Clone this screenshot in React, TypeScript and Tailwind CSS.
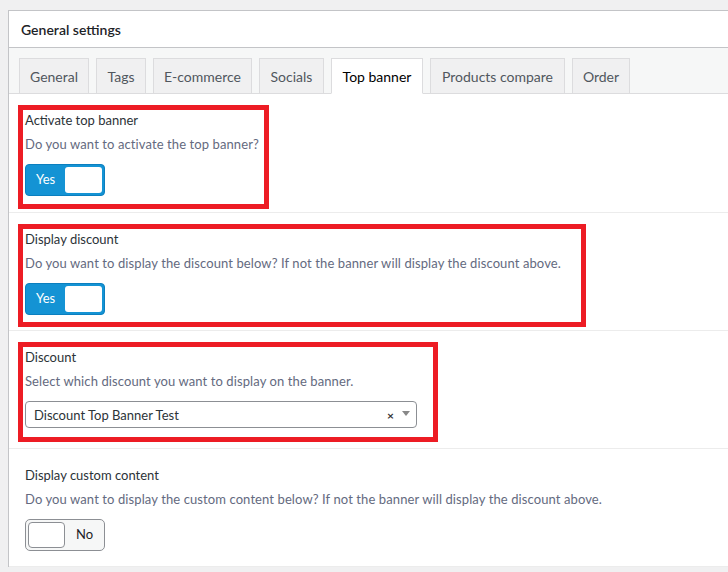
import React from "react";

const tabs: { name: string; w: string }[] = [
  { name: "General", w: "w-[70px]" },
  { name: "Tags", w: "w-[50px]" },
  { name: "E-commerce", w: "w-[99px]" },
  { name: "Socials", w: "w-[65px]" },
  { name: "Top banner", w: "w-[92px]" },
  { name: "Products compare", w: "w-[135px]" },
  { name: "Order", w: "w-[58px]" },
];

function ToggleYes() {
  return (
    <div className="flex h-[32px] w-[80px] items-center justify-between rounded-[4px] border border-[#0b7fbf] bg-[#1493d4] pl-[10px] pr-[2px]">
      <span className="text-[13px] text-white">Yes</span>
      <span className="h-[26px] w-[37px] rounded-[3px] bg-white" />
    </div>
  );
}

function ToggleNo() {
  return (
    <div className="flex h-[32px] w-[80px] items-center rounded-[5px] border border-[#8c8f94] bg-[#f6f7f7] pl-[2px]">
      <span className="h-[26px] w-[37px] rounded-[4px] border border-[#8c8f94] bg-white" />
      <span className="ml-[11px] text-[13px] text-[#1d2327]">No</span>
    </div>
  );
}

function Section({
  label,
  desc,
  children,
  box,
  first,
}: {
  label: string;
  desc: string;
  children: React.ReactNode;
  box?: string;
  first?: boolean;
}) {
  return (
    <div
      className={
        first
          ? "relative border-b border-[#ececec] pl-[16px] pt-[16px] pb-[16px]"
          : "relative border-b border-[#ececec] pl-[16px] pt-[16px] pb-[15px]"
      }
    >
      <div className="h-[20px] text-[13px] leading-[20px] text-[#2c3338]">{label}</div>
      <div className="mt-[4px] h-[20px] text-[13px] leading-[20px] tracking-[0.1px] text-[#646a80]">{desc}</div>
      <div className="mt-[10px] h-[32px]">{children}</div>
      {box && <div className={box} />}
    </div>
  );
}

export default function App() {
  return (
    <div className="min-h-screen bg-[#f0f0f1] pl-[8px] pt-[10px] font-[Lato,sans-serif]">
      <div className="border-l border-t border-[#c3c4c7] bg-white">
        <div className="flex h-[37px] items-center border-b border-[#c3c4c7] pl-[12px] text-[14px] font-semibold text-[#1d2327]">
          General settings
        </div>
        <div className="flex gap-[7px] border-b border-[#dcdcde] bg-[#f6f7f7] pl-[10px] pt-[10px]">
          {tabs.map((t) =>
            t.name === "Top banner" ? (
              <div
                key={t.name}
                className={`${t.w} -mb-px flex h-[36px] items-center justify-center border border-b-white border-[#dcdcde] bg-white pt-[1px] text-[14px] text-[#000]`}
              >
                {t.name}
              </div>
            ) : (
              <div
                key={t.name}
                className={`${t.w} flex h-[35px] items-center justify-center border border-b-0 border-[#dcdcde] bg-[#f0f0f1] pt-[1px] text-[14px] text-[#50575e]`}
              >
                {t.name}
              </div>
            )
          )}
        </div>

        <Section
          first
          label="Activate top banner"
          desc="Do you want to activate the top banner?"
          box="pointer-events-none absolute left-[9px] top-[11px] h-[104px] w-[251px] border-[5px] border-[#ed1c24]"
        >
          <ToggleYes />
        </Section>

        <Section
          label="Display discount"
          desc="Do you want to display the discount below? If not the banner will display the discount above."
          box="pointer-events-none absolute left-[9px] top-[11px] h-[103px] w-[568px] border-[5px] border-[#ed1c24]"
        >
          <ToggleYes />
        </Section>

        <Section
          label="Discount"
          desc="Select which discount you want to display on the banner."
          box="pointer-events-none absolute left-[9px] top-[11px] h-[100px] w-[420px] border-[5px] border-[#ed1c24]"
        >
          <div className="flex h-[27px] w-[392px] items-center rounded-[4px] border border-[#8c8f94] bg-white pl-[8px] pr-[6px] text-[13px] text-[#2c3338]">
            <span className="flex-1 pt-[2px]">Discount Top Banner Test</span>
            <span className="mt-[3px] text-[12px] font-bold leading-none text-[#333]">×</span>
            <svg className="mb-[2px] ml-[8px]" width="8" height="5" viewBox="0 0 8 5">
              <path d="M0 0 L8 0 L4 5 Z" fill="#888" />
            </svg>
          </div>
        </Section>

        <Section
          label="Display custom content"
          desc="Do you want to display the custom content below? If not the banner will display the discount above."
        >
          <ToggleNo />
        </Section>
      </div>
    </div>
  );
}
